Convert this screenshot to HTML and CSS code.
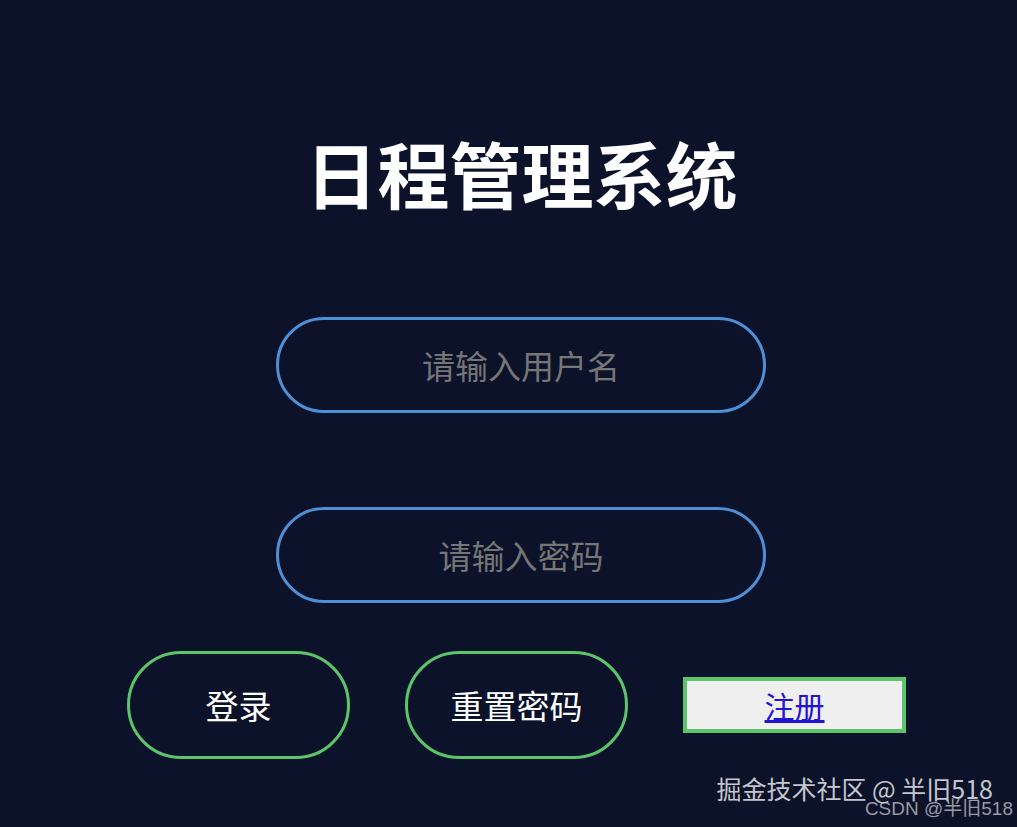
FILE: index.html
```html
<!DOCTYPE html>
<html lang="zh-CN">
<head>
<meta charset="utf-8">
<title>日程管理系统</title>
<link rel="stylesheet" href="styles.css">
</head>
<body>
<div class="page">
  <div class="col">
    <h1 class="title">日程管理系统</h1>
    <input class="field" type="text" placeholder="请输入用户名">
    <input class="field field-gap" type="password" placeholder="请输入密码">
  </div>
  <div class="actions">
    <button class="btn" type="button">登录</button>
    <button class="btn" type="button">重置密码</button>
    <button class="reg" type="button"><a href="#">注册</a></button>
  </div>
</div>
<div class="wm wm-juejin">掘金技术社区 @ 半旧518</div>
<div class="wm wm-csdn">CSDN @半旧518</div>
</body>
</html>
```

FILE: styles.css
```css
html, body {
  margin: 0;
  padding: 0;
}
body {
  background: #0c1229;
  min-height: 100vh;
  font-family: "Noto Sans CJK SC", "Noto Sans", sans-serif;
  position: relative;
  overflow: hidden;
}
.page {
  padding-top: 129px;
}
.col {
  margin-left: 276px;
  width: 490px;
  display: flex;
  flex-direction: column;
}
.title {
  margin: 0 0 102px 0;
  padding-left: 1px;
  font-size: 72px;
  line-height: 86px;
  font-weight: 700;
  color: #ffffff;
  text-align: center;
}
.field {
  box-sizing: border-box;
  width: 490px;
  height: 96px;
  margin: 0;
  border: 3px solid #4f8fd6;
  border-radius: 48px;
  background: transparent;
  color: #ffffff;
  font-family: "Noto Sans CJK SC", sans-serif;
  font-size: 33px;
  text-align: center;
  outline: none;
}
.field::placeholder {
  color: #767676;
}
.field-gap {
  margin-top: 94px;
}
.actions {
  margin-top: 48px;
  margin-left: 127px;
  display: flex;
  align-items: center;
  gap: 55px;
}
.btn {
  box-sizing: border-box;
  width: 223px;
  height: 108px;
  border: 3px solid #5cc56a;
  border-radius: 54px;
  background: transparent;
  color: #ffffff;
  font-family: "Noto Sans CJK SC", sans-serif;
  font-size: 33px;
  padding: 0;
  cursor: pointer;
}
.reg {
  box-sizing: border-box;
  width: 223px;
  height: 56px;
  border: 4px solid #5cc56a;
  border-radius: 0;
  background: #efefef;
  padding: 0;
  font-family: "Noto Sans CJK SC", sans-serif;
  font-size: 30px;
  line-height: 1;
}
.reg a {
  color: #2314d4;
  text-decoration: underline;
}
.wm {
  position: absolute;
  white-space: nowrap;
}
.wm-juejin {
  right: 24px;
  bottom: 22px;
  font-family: "Noto Sans CJK SC", sans-serif;
  font-size: 25px;
  line-height: 34px;
  color: rgba(225, 225, 230, 0.88);
}
.wm-csdn {
  right: 4px;
  bottom: 6px;
  font-family: "Liberation Sans", "Noto Sans CJK SC", sans-serif;
  font-size: 19px;
  line-height: 24px;
  color: rgba(200, 200, 205, 0.75);
}
```
